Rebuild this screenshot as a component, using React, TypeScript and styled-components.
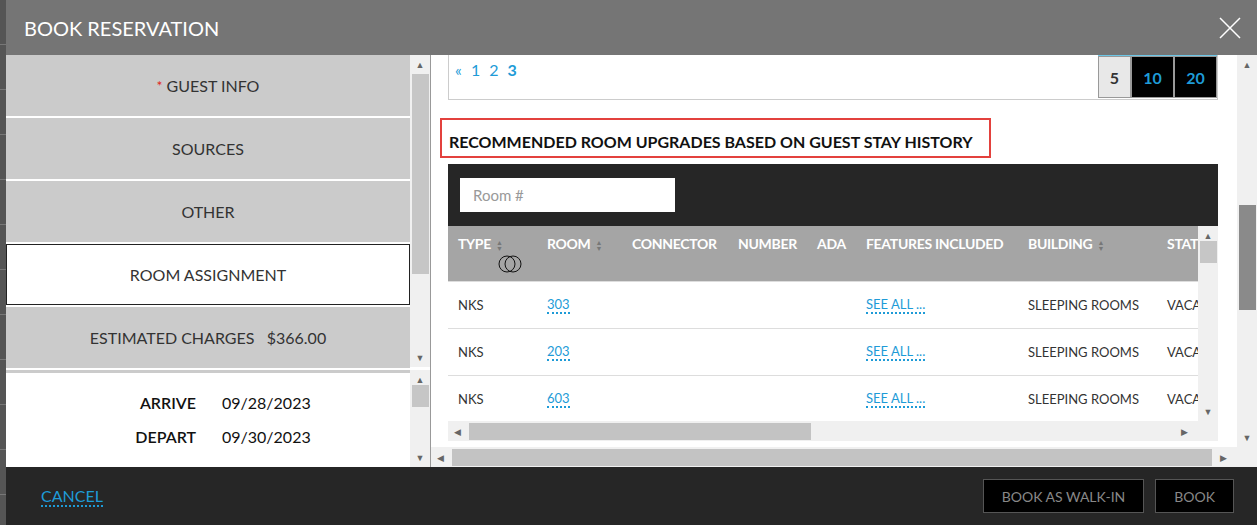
import React from "react";
import styled, { createGlobalStyle } from "styled-components";

const Global = createGlobalStyle`
  body { margin: 0; font-family: Lato, "Open Sans", sans-serif; background: #5b5b5b; }
  * { box-sizing: border-box; }
`;

const Page = styled.div`
  width: 1257px;
  height: 525px;
  display: flex;
  overflow: hidden;
`;

const Backdrop = styled.div`
  width: 6px;
  flex-shrink: 0;
  background: repeating-linear-gradient(180deg, #555 0 44px, #777 44px 45px);
`;

const Modal = styled.div`
  flex: 1;
  min-width: 0;
  display: flex;
  flex-direction: column;
  background: #fff;
`;

const Header = styled.header`
  height: 55px;
  background: #757575;
  display: flex;
  align-items: center;
  justify-content: space-between;
  padding: 0 16px 0 18px;
  color: #fff;
  font-size: 20px;
`;

const Body = styled.div`
  height: 412px;
  display: flex;
`;

const LeftCol = styled.div`
  width: 404px;
  flex-shrink: 0;
  display: flex;
  flex-direction: column;
  gap: 2px;
  background: #fff;
`;

const NavItem = styled.div<{ $active?: boolean }>`
  height: 61px;
  flex-shrink: 0;
  display: flex;
  align-items: center;
  justify-content: center;
  font-size: 16px;
  color: #333;
  background: ${p => (p.$active ? "#fff" : "#cbcbcb")};
  border: ${p => (p.$active ? "1px solid #222" : "none")};
  gap: 4px;
`;

const Star = styled.span`
  color: #e0271b;
  font-size: 14px;
`;

const Dates = styled.div`
  border-top: 3px solid #cbcbcb;
  display: grid;
  grid-template-columns: 190px 1fr;
  column-gap: 26px;
  row-gap: 15px;
  padding-top: 20px;
  font-size: 16px;
  color: #111;
  & > span:nth-child(odd) { text-align: right; font-weight: 600; }
`;

const VScroll = styled.div<{ $h: number }>`
  width: 20px;
  height: ${p => p.$h}px;
  background: #f0f0f0;
  display: flex;
  flex-direction: column;
  align-items: center;
  justify-content: space-between;
  padding: 4px 0;
  font-size: 9px;
  color: #666;
  flex-shrink: 0;
`;

const Thumb = styled.div<{ $h: number }>`
  width: 17px;
  height: ${p => p.$h}px;
  background: #c6c6c6;
`;

const LeftScrolls = styled.div`
  display: flex;
  flex-direction: column;
  gap: 3px;
  border-right: 1px solid #999;
  flex-shrink: 0;
`;

const Right = styled.div`
  flex: 1;
  min-width: 0;
  display: flex;
  flex-direction: column;
`;

const RightMain = styled.div`
  flex: 1;
  min-width: 0;
  display: flex;
`;

const Content = styled.div`
  flex: 1;
  min-width: 0;
  padding: 0 19px 0 17px;
  display: flex;
  flex-direction: column;
`;

const Pager = styled.div`
  height: 45px;
  border: 1px solid #ccc;
  border-top: none;
  display: flex;
  justify-content: space-between;
  align-items: flex-start;
  padding-left: 6px;
`;

const PageLinks = styled.div`
  display: flex;
  gap: 9px;
  color: #1e9bd7;
  font-size: 16px;
  margin-top: 5px;
  b { font-weight: 700; }
`;

const Sizes = styled.div`
  display: flex;
  height: 43px;
  border-top: 1px solid #6cc6e6;
`;

const SizeBtn = styled.div<{ $on?: boolean }>`
  width: ${p => (p.$on ? 33 : 43)}px;
  display: flex;
  align-items: center;
  justify-content: center;
  font-weight: 700;
  font-size: 16px;
  background: ${p => (p.$on ? "#e8e8e8" : "#000")};
  color: ${p => (p.$on ? "#333" : "#1e9bd7")};
  border: 1px solid #999;
`;

const Heading = styled.h2`
  margin: 18px 0 6px -8px;
  align-self: flex-start;
  border: 2px solid #e3413d;
  padding: 12px 16px 5px 7px;
  font-size: 16px;
  font-weight: 700;
  color: #111;
  white-space: nowrap;
`;

const Table = styled.div`
  height: 277px;
  display: flex;
  flex-direction: column;
`;

const Toolbar = styled.div`
  height: 62px;
  background: #262626;
  padding: 14px 12px;
  flex-shrink: 0;
`;

const SearchInput = styled.input`
  width: 215px;
  height: 34px;
  border: none;
  padding: 0 13px;
  font-family: Lato, sans-serif;
  font-size: 15px;
  &::placeholder { color: #999; }
`;

const Grid = styled.div`
  flex: 1;
  display: flex;
  overflow: hidden;
`;

const Rows = styled.div`
  flex: 1;
  min-width: 0;
  overflow: hidden;
`;

const cols = "89px 85px 106px 79px 49px 162px 139px 60px";

const HeadRow = styled.div`
  height: 55px;
  background: #a5a5a5;
  display: grid;
  grid-template-columns: ${cols};
  align-items: start;
  padding: 9px 0 0 10px;
  color: #fff;
  font-weight: 700;
  font-size: 14px;
  letter-spacing: -0.3px;
  white-space: nowrap;
  position: relative;
`;

const Sort = styled.span`
  font-size: 7px;
  color: #777;
  margin-left: 5px;
  line-height: 6px;
  display: inline-flex;
  flex-direction: column;
  vertical-align: middle;
`;

const Row = styled.div`
  height: 47px;
  display: grid;
  grid-template-columns: ${cols};
  align-items: center;
  padding-left: 10px;
  border-top: 1px solid #ddd;
  font-size: 13px;
  color: #333;
  white-space: nowrap;
`;

const Link = styled.span`
  color: #1e9bd7;
  border-bottom: 2px dotted #1e9bd7;
  justify-self: start;
`;

const HScroll = styled.div`
  height: 20px;
  background: #f0f0f0;
  display: flex;
  align-items: center;
  padding: 0 6px;
  gap: 8px;
  font-size: 9px;
  color: #666;
  flex-shrink: 0;
`;

const HThumb = styled.div<{ $w: number }>`
  height: 17px;
  width: ${p => p.$w}px;
  background: #c3c3c3;
`;

const Footer = styled.footer`
  height: 58px;
  background: #262626;
  display: flex;
  align-items: center;
  padding: 0 23px 0 35px;
  gap: 11px;
`;

const Cancel = styled.span`
  color: #1e9bd7;
  font-size: 16px;
  border-bottom: 2px dotted #1e9bd7;
  margin-right: auto;
`;

const FootBtn = styled.button`
  background: #000;
  border: 1px solid #555;
  color: #888;
  font-family: Lato, sans-serif;
  font-size: 14px;
  height: 34px;
  padding: 0 18px;
`;

const Rings = styled.svg`
  position: absolute;
  left: 48px;
  top: 27px;
`;

const rooms = ["303", "203", "603"];

const S = () => (
  <Sort>
    <span>▲</span>
    <span>▼</span>
  </Sort>
);

export default function App() {
  return (
    <Page>
      <Global />
      <Backdrop />
      <Modal>
        <Header>
          <span>BOOK RESERVATION</span>
          <svg width="22" height="22" viewBox="0 0 22 22" stroke="#fff" strokeWidth="1.5">
            <path d="M1 1L21 21M21 1L1 21" />
          </svg>
        </Header>
        <Body>
          <LeftCol>
            <NavItem>
              <Star>*</Star> GUEST INFO
            </NavItem>
            <NavItem>SOURCES</NavItem>
            <NavItem>OTHER</NavItem>
            <NavItem $active>ROOM ASSIGNMENT</NavItem>
            <NavItem>ESTIMATED CHARGES&nbsp;&nbsp;&nbsp;$366.00</NavItem>
            <Dates>
              <span>ARRIVE</span>
              <span>09/28/2023</span>
              <span>DEPART</span>
              <span>09/30/2023</span>
            </Dates>
          </LeftCol>
          <LeftScrolls>
            <VScroll $h={312}>
              <span>▲</span>
              <Thumb $h={200} style={{ marginTop: 4 }} />
              <span style={{ marginTop: "auto" }}>▼</span>
            </VScroll>
            <VScroll $h={97}>
              <span>▲</span>
              <Thumb $h={22} />
              <span style={{ marginTop: "auto" }}>▼</span>
            </VScroll>
          </LeftScrolls>
          <Right>
            <RightMain>
              <Content>
                <Pager>
                  <PageLinks>
                    <span>«</span>
                    <span>1</span>
                    <span>2</span>
                    <b>3</b>
                  </PageLinks>
                  <Sizes>
                    <SizeBtn $on>5</SizeBtn>
                    <SizeBtn>10</SizeBtn>
                    <SizeBtn>20</SizeBtn>
                  </Sizes>
                </Pager>
                <Heading>RECOMMENDED ROOM UPGRADES BASED ON GUEST STAY HISTORY</Heading>
                <Table>
                  <Toolbar>
                    <SearchInput placeholder="Room #" />
                  </Toolbar>
                  <Grid>
                    <Rows>
                      <HeadRow>
                        <span>TYPE<S /></span>
                        <span>ROOM<S /></span>
                        <span>CONNECTOR</span>
                        <span>NUMBER</span>
                        <span>ADA</span>
                        <span>FEATURES INCLUDED</span>
                        <span>BUILDING<S /></span>
                        <span>STATUS</span>
                        <Rings width="30" height="22" viewBox="0 0 30 22" fill="none" stroke="#111" strokeWidth="1">
                          <circle cx="11" cy="11" r="8" />
                          <circle cx="17" cy="11" r="8" />
                        </Rings>
                      </HeadRow>
                      {rooms.map(r => (
                        <Row key={r}>
                          <span>NKS</span>
                          <Link>{r}</Link>
                          <span />
                          <span />
                          <span />
                          <Link>SEE ALL ...</Link>
                          <span>SLEEPING ROOMS</span>
                          <span>VACANT</span>
                        </Row>
                      ))}
                    </Rows>
                    <VScroll $h={195}>
                      <span>▲</span>
                      <Thumb $h={22} />
                      <span style={{ marginTop: "auto" }}>▼</span>
                    </VScroll>
                  </Grid>
                  <HScroll>
                    <span>◀</span>
                    <HThumb $w={342} />
                    <span style={{ marginLeft: "auto", marginRight: 24 }}>▶</span>
                  </HScroll>
                </Table>
              </Content>
              <VScroll $h={392}>
                <span>▲</span>
                <Thumb $h={105} style={{ background: "#8a8a8a", marginTop: 135 }} />
                <span style={{ marginTop: "auto" }}>▼</span>
              </VScroll>
            </RightMain>
            <HScroll>
              <span>◀</span>
              <HThumb $w={770} />
              <span style={{ marginLeft: "auto", marginRight: 24 }}>▶</span>
            </HScroll>
          </Right>
        </Body>
        <Footer>
          <Cancel>CANCEL</Cancel>
          <FootBtn>BOOK AS WALK-IN</FootBtn>
          <FootBtn>BOOK</FootBtn>
        </Footer>
      </Modal>
    </Page>
  );
}
